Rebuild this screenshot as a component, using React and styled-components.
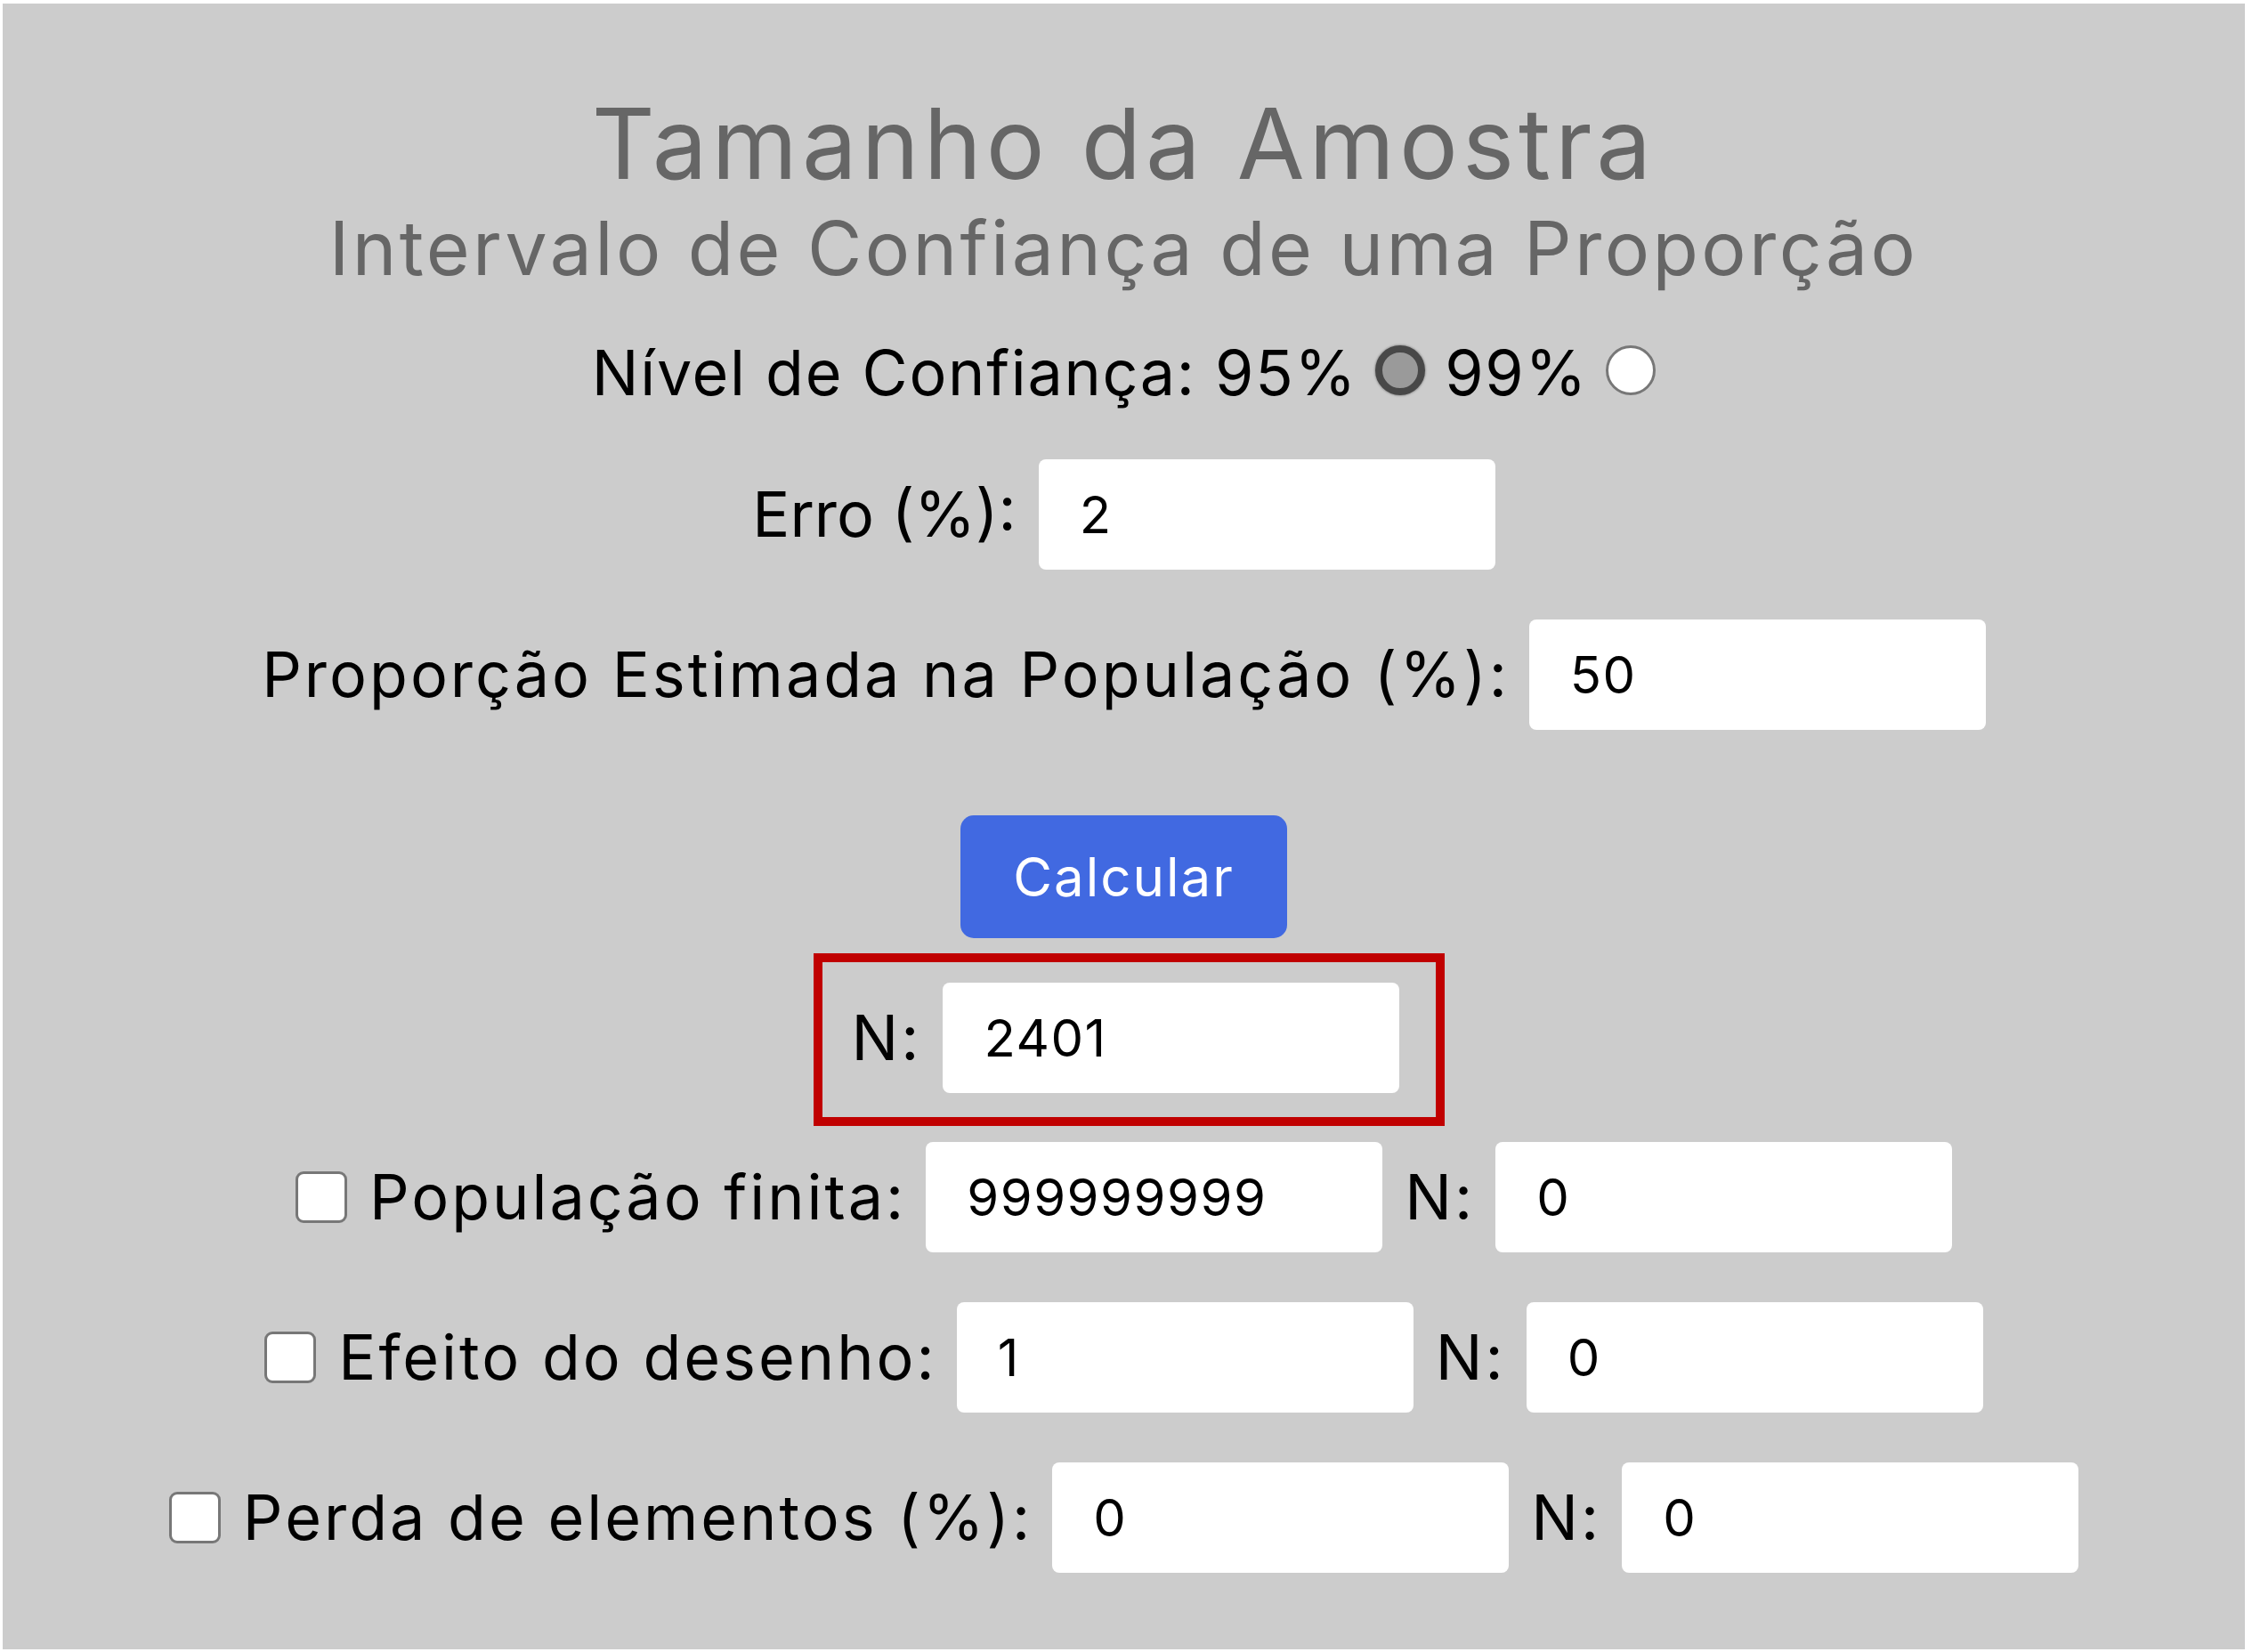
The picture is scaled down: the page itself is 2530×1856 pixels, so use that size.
import React, { useState } from 'react';
import styled, { createGlobalStyle } from 'styled-components';

const GlobalStyle = createGlobalStyle`
  html, body {
    margin: 0;
    background: #fff;
  }
  body {
    padding: 4px 8px 0 3px;
    font-family: Inter, "Liberation Sans", sans-serif;
  }
`;

const Panel = styled.div`
  box-sizing: border-box;
  height: 1849px;
  padding-top: 102px;
  background: #cccccc;
  display: flex;
  flex-direction: column;
  align-items: center;
`;

const Title = styled.h1`
  margin: 0;
  font-size: 110px;
  line-height: 1;
  font-weight: 400;
  color: #666;
  letter-spacing: 5px;
`;

const Subtitle = styled.h2`
  margin: 21px 0 0;
  font-size: 84px;
  line-height: 1;
  font-weight: 400;
  color: #666;
  letter-spacing: 3.4px;
`;

const Row = styled.div`
  display: flex;
  align-items: center;
  justify-content: center;
  gap: ${p => p.$gap || 25}px;
  margin-top: ${p => p.$top || 0}px;
`;

const Label = styled.label`
  font-size: 70px;
  line-height: 1;
  color: #000;
  white-space: nowrap;
  letter-spacing: ${p => p.$spacing ?? 3}px;
  margin-right: -${p => p.$spacing ?? 3}px;
`;

const Radio = styled.input.attrs({ type: 'radio' })`
  appearance: none;
  box-sizing: border-box;
  margin: 0 0 6px;
  width: 56px;
  height: 56px;
  border-radius: 50%;
  background: #fff;
  border: 3px solid #777;
  &:checked {
    background: #9a9a9a;
    border: 8px solid #484848;
    box-shadow: 0 0 2px 1px #999;
  }
`;

const Checkbox = styled.input.attrs({ type: 'checkbox' })`
  appearance: none;
  box-sizing: border-box;
  margin: 0;
  width: 58px;
  height: 58px;
  border-radius: 9px;
  background: #fff;
  border: 3px solid #777;
`;

const Field = styled.input`
  box-sizing: border-box;
  width: 513px;
  height: 124px;
  padding: 0 0 0 46px;
  border: none;
  border-radius: 8px;
  background: #fff;
  font-family: inherit;
  font-size: 58px;
  letter-spacing: 1.5px;
  color: #000;
  outline: none;
`;

const Button = styled.button`
  box-sizing: border-box;
  margin-top: 96px;
  width: 367px;
  height: 138px;
  border: none;
  border-radius: 15px;
  background: #4169e1;
  color: #fff;
  font-family: inherit;
  font-size: 60px;
  letter-spacing: 2px;
  cursor: pointer;
`;

const ResultBox = styled.div`
  margin: 17px 0 0 12px;
  padding: 23px 41px 27px 33px;
  border: 10px solid #c00000;
`;

const options = [
  { id: 'finita', label: 'População finita:', value: '999999999', top: 18 },
  { id: 'desenho', label: 'Efeito do desenho:', value: '1', top: 56 },
  { id: 'perda', label: 'Perda de elementos (%):', value: '0', top: 56 },
];

const OptionRow = ({ option }) => (
  <Row $top={option.top}>
    <Checkbox id={option.id} />
    <Label htmlFor={option.id}>{option.label}</Label>
    <Field defaultValue={option.value} />
    <Row $gap={26}>
      <Label>N:</Label>
      <Field defaultValue="0" readOnly />
    </Row>
  </Row>
);

export default function App() {
  const [level, setLevel] = useState('95');
  return (
    <>
      <GlobalStyle />
      <Panel>
        <Title>Tamanho da Amostra</Title>
        <Subtitle>Intervalo de Confiança de uma Proporção</Subtitle>
        <Row $top={63} $gap={22}>
          <Label $spacing={1.7}>Nível de Confiança: 95%</Label>
          <Radio name="nivel" checked={level === '95'} onChange={() => setLevel('95')} />
          <Label $spacing={1.7}>99%</Label>
          <Radio name="nivel" checked={level === '99'} onChange={() => setLevel('99')} />
        </Row>
        <Row $top={62}>
          <Label $spacing={0}>Erro (%):</Label>
          <Field defaultValue="2" />
        </Row>
        <Row $top={56}>
          <Label>Proporção Estimada na População (%):</Label>
          <Field defaultValue="50" />
        </Row>
        <Button>Calcular</Button>
        <ResultBox>
          <Row $gap={27}>
            <Label>N:</Label>
            <Field defaultValue="2401" readOnly />
          </Row>
        </ResultBox>
        {options.map(option => (
          <OptionRow key={option.id} option={option} />
        ))}
      </Panel>
    </>
  );
}
